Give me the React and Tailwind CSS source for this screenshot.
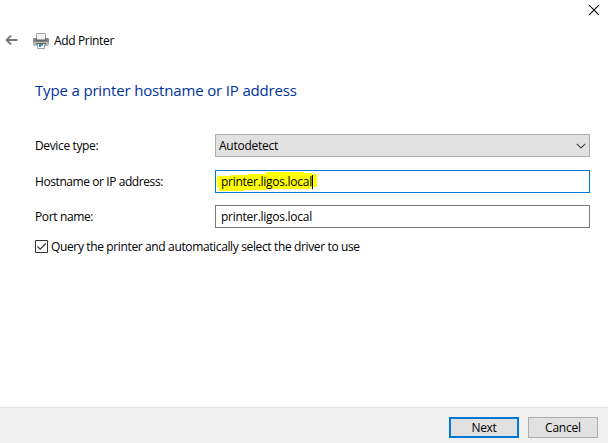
import React from 'react';

function BackArrow() {
  return (
    <svg width="13" height="11" viewBox="0 0 13 11" fill="none" stroke="#777" strokeWidth="1.8">
      <path d="M12.5 5H1.5M6 .5L1.500 5l4.500 4.500" />
    </svg>
  );
}

function PrinterIcon() {
  return (
    <svg width="16" height="16" viewBox="0 0 16 16">
      <path d="M3.500.5h9v6h-9z" fill="#f2f2f2" stroke="#a6a6a6" />
      <path d="M1 5h2v2h10V5h2l1 1v4H0V6z" fill="#858585" />
      <path d="M3 5h1v2h8V5h1v3H3z" fill="#666" />
      <path d="M0 9h16v3l-1 1H1l-1-1z" fill="#b4b4b4" />
      <path d="M3 10h10v1H3z" fill="#666" />
      <path d="M4.500 11v4.500h7V11" fill="#fff" stroke="#9d9d9d" />
      <path d="M6 11h4v1H6z" fill="#5b7f94" />
      <path d="M6 12h2v2H6z" fill="#2382bd" />
      <path d="M8 12h2v1H8z" fill="#63b7d8" />
    </svg>
  );
}

function Row({ label, children, className }) {
  return (
    <div className={`flex h-[23px] items-center ${className}`}>
      <div className="w-[180px] shrink-0">{label}</div>
      {children}
    </div>
  );
}

export default function App() {
  return (
    <div className="flex h-[443px] w-[608px] flex-col overflow-hidden bg-white font-['Open_Sans','Noto_Sans',sans-serif] text-[12px] leading-4 whitespace-nowrap text-black">
      <div className="flex h-[31px] justify-end pt-[5px] pr-[9px]">
        <svg width="10" height="10" viewBox="0 0 10 10" stroke="#000" strokeWidth="1.1">
          <path d="M0 0l10 10M10 0L0 10" />
        </svg>
      </div>
      <div className="flex h-5 items-center pl-[5px]">
        <div className="-mt-px"><BackArrow /></div>
        <div className="-mt-px ml-[15px]"><PrinterIcon /></div>
        <span className="ml-[5px] tracking-[-0.35px]">Add Printer</span>
      </div>
      <h1 className="mt-[28px] ml-[35px] h-[22px] text-[15px] leading-[22px] tracking-[-0.16px] text-[#003399]">
        <span>Type a printer hostname or IP address</span>
      </h1>
      <div className="mt-[33px] pl-[35px]">
        <Row className="" label={<span className="tracking-[-0.36px]">Device type:</span>}>
          <div className="flex h-[23px] w-[375px] items-center justify-between border border-[#adadad] bg-[#e1e1e1] pr-[3px] pl-[3px]">
            <span className="tracking-[-0.25px]">Autodetect</span>
            <svg width="10" height="6" viewBox="0 0 10 6" fill="none" stroke="#444" strokeWidth="1.1">
              <path d="M.8.8L5 5 9.200.8" />
            </svg>
          </div>
        </Row>
        <Row className="mt-[13px]" label={<span className="tracking-[-0.42px]">Hostname or IP address:</span>}>
          <div className="relative flex h-[23px] w-[375px] items-center border border-[#0078d7] pl-[5px]">
            <svg className="absolute top-0 left-0" width="104" height="21" viewBox="0 0 104 21">
              <path d="M1 5h14V4h17V3h18V1h38v1h8v1h5v13h-6v2H51v1H28v1H3v-4H1z" fill="#ff0" />
            </svg>
            <span className="relative tracking-[-0.27px]">printer.ligos.local</span>
            <span className="relative h-[14px] w-px bg-black" />
          </div>
        </Row>
        <Row className="mt-[12px]" label={<span className="tracking-[-0.36px]">Port name:</span>}>
          <div className="flex h-[23px] w-[375px] items-center border border-[#7a7a7a] pl-[5px]">
            <span className="tracking-[-0.27px]">printer.ligos.local</span>
          </div>
        </Row>
        <div className="mt-[11px] flex h-4 items-center">
          <svg className="-mt-px" width="13" height="13" viewBox="0 0 13 13" fill="none" stroke="#333">
            <path d="M.5.5h12v12H.5z" />
            <path d="M2.500 6.500l2.700 2.700 5.500-5.700" strokeWidth="1.2" />
          </svg>
          <span className="ml-[3px] tracking-[-0.365px]">Query the printer and automatically select the driver to use</span>
        </div>
      </div>
      <div className="mt-auto flex h-9 justify-end gap-[9px] border-t border-[#dfdfdf] bg-[#f0f0f0] pt-[9px] pr-[10px]">
        <button className="h-[21px] w-[70px] border-2 border-[#0078d7] bg-[#e1e1e1] leading-4 tracking-[-0.3px]">Next</button>
        <button className="h-[21px] w-[70px] border border-[#adadad] bg-[#e1e1e1] leading-4 tracking-[-0.2px]">Cancel</button>
      </div>
    </div>
  );
}
